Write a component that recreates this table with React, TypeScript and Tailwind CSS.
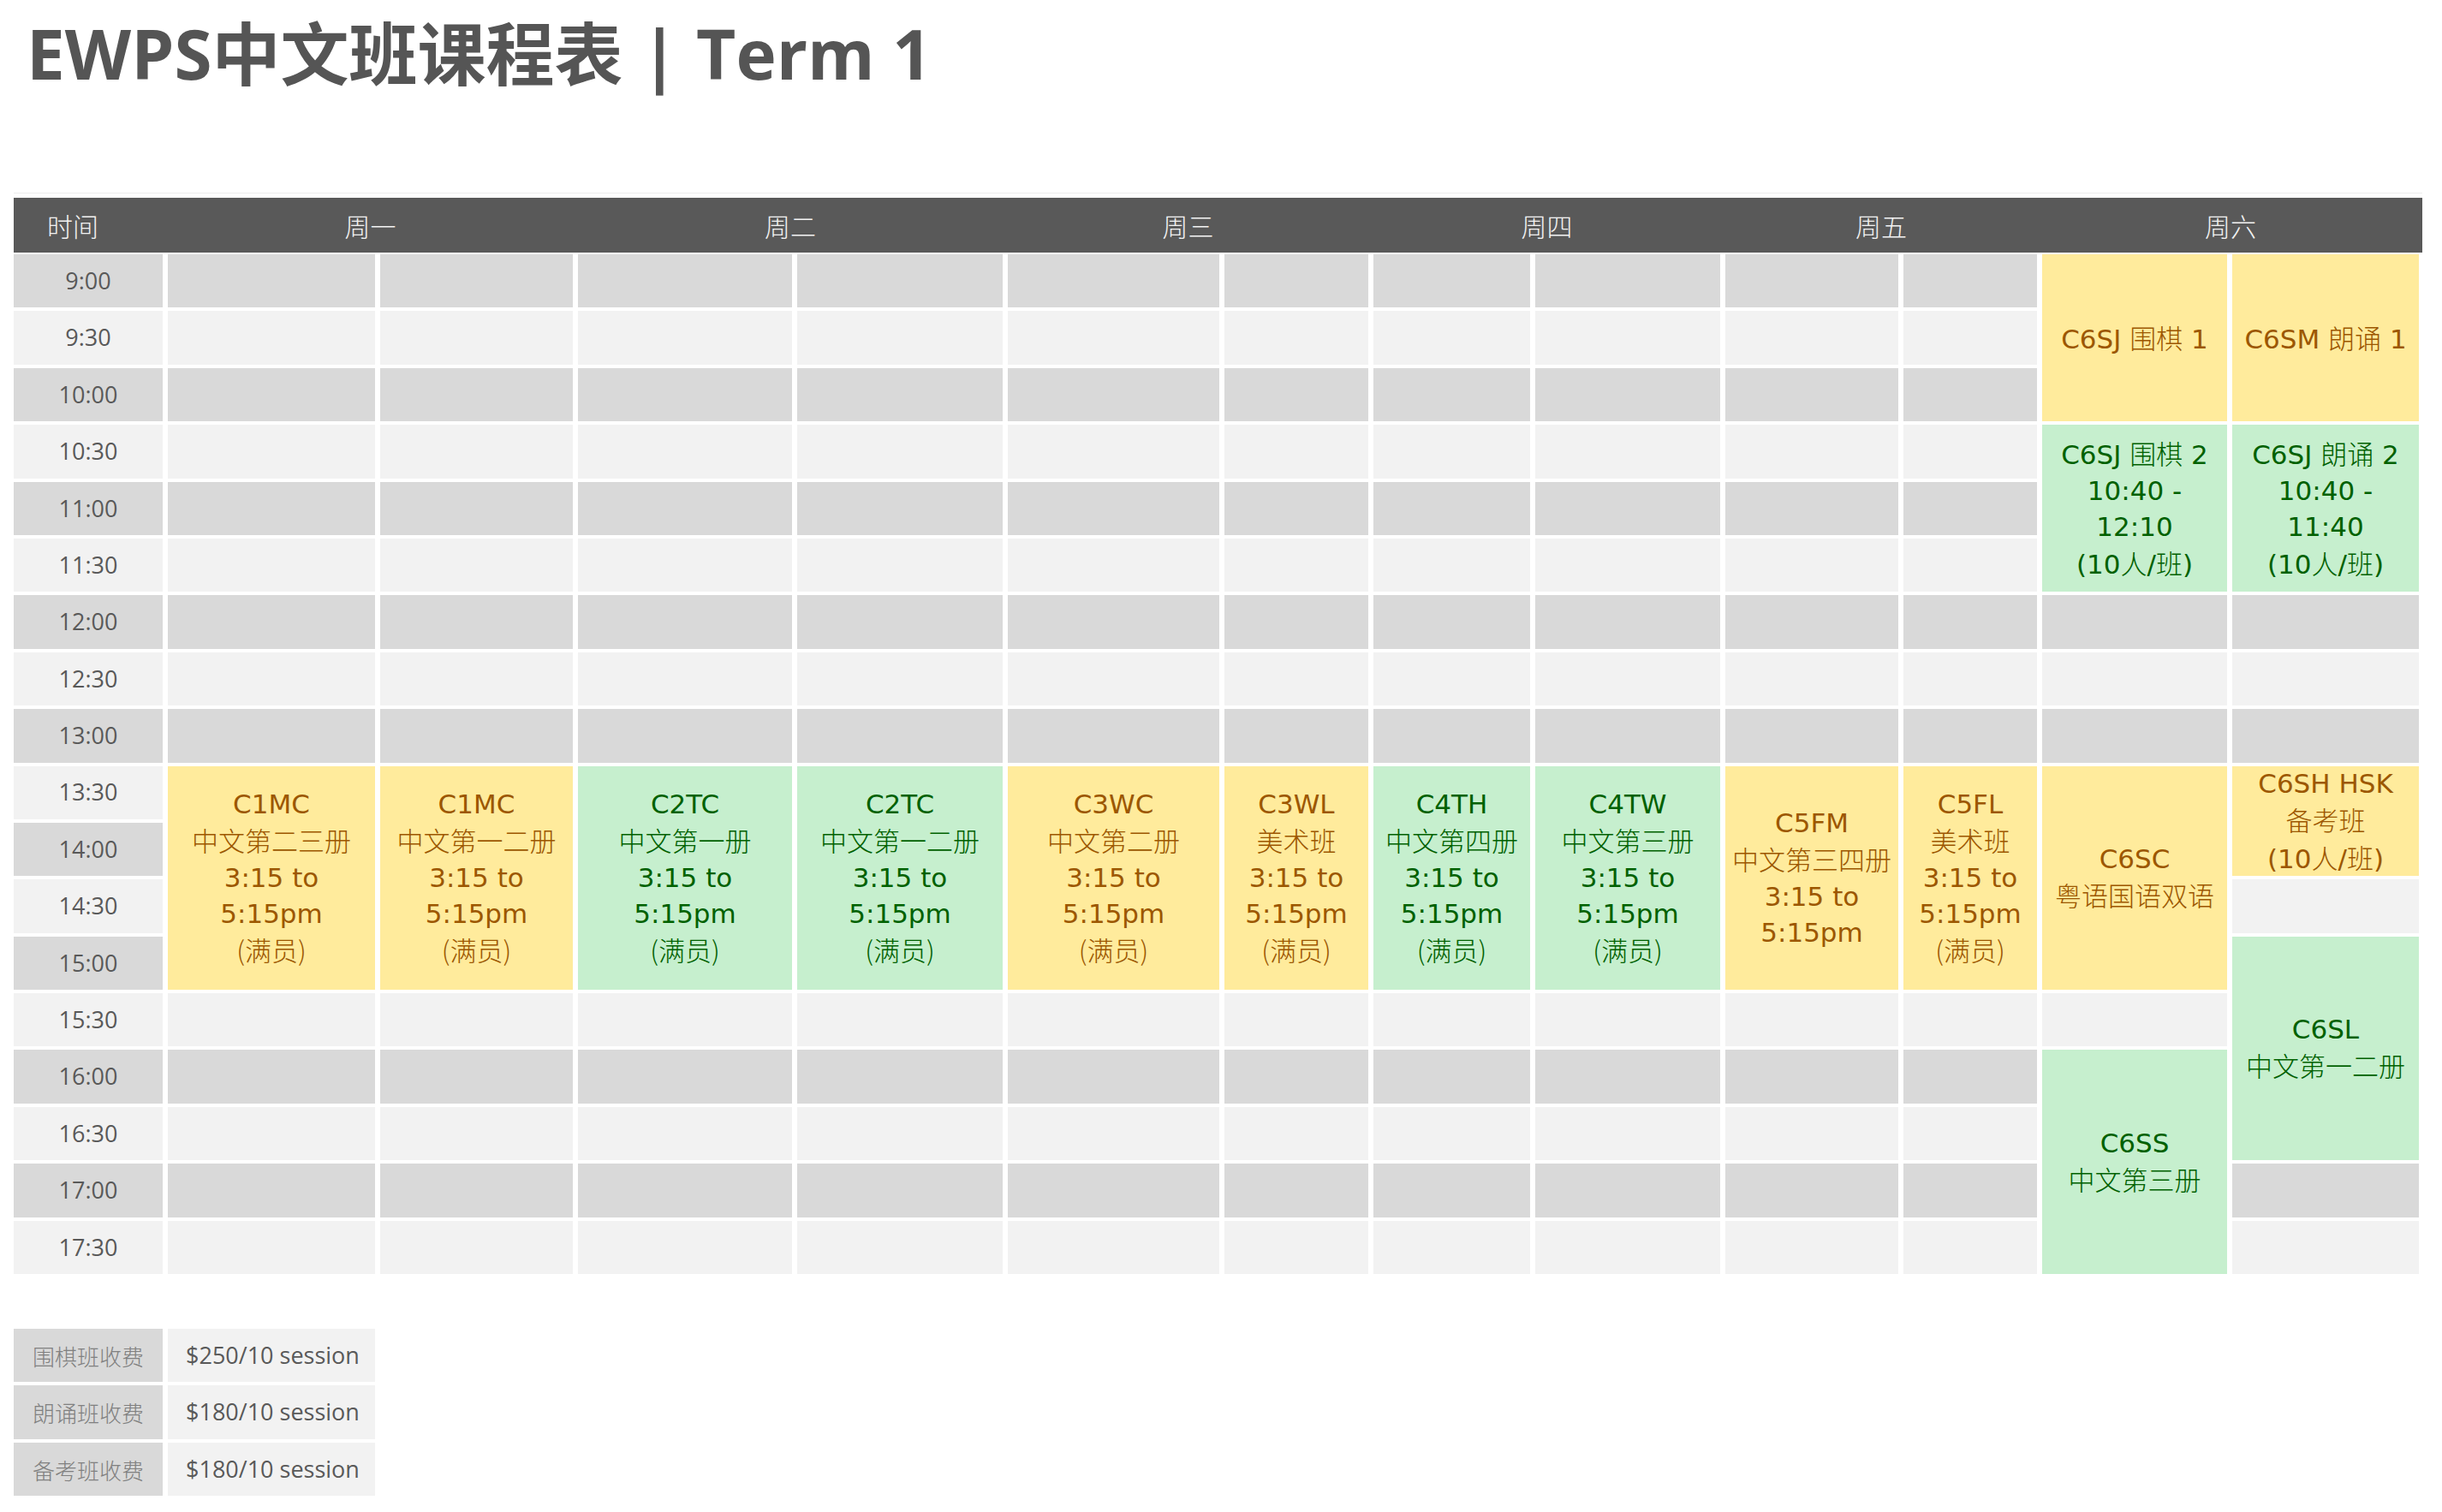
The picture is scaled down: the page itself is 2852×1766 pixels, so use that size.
import React from 'react';

type Tone = 'yellow' | 'green';

interface Course {
  col: number;
  row: number;
  span: number;
  tone: Tone;
  lines: string[];
}

const TIMES = [
  '9:00', '9:30', '10:00', '10:30', '11:00', '11:30', '12:00', '12:30', '13:00',
  '13:30', '14:00', '14:30', '15:00', '15:30', '16:00', '16:30', '17:00', '17:30',
];

const DAYS = ['周一', '周二', '周三', '周四', '周五', '周六'];

const FULL = '(满员)';
const TIME_LINES = ['3:15 to', '5:15pm'];

const COURSES: Course[] = [
  { col: 1, row: 9, span: 4, tone: 'yellow', lines: ['C1MC', '中文第二三册', ...TIME_LINES, FULL] },
  { col: 2, row: 9, span: 4, tone: 'yellow', lines: ['C1MC', '中文第一二册', ...TIME_LINES, FULL] },
  { col: 3, row: 9, span: 4, tone: 'green', lines: ['C2TC', '中文第一册', ...TIME_LINES, FULL] },
  { col: 4, row: 9, span: 4, tone: 'green', lines: ['C2TC', '中文第一二册', ...TIME_LINES, FULL] },
  { col: 5, row: 9, span: 4, tone: 'yellow', lines: ['C3WC', '中文第二册', ...TIME_LINES, FULL] },
  { col: 6, row: 9, span: 4, tone: 'yellow', lines: ['C3WL', '美术班', ...TIME_LINES, FULL] },
  { col: 7, row: 9, span: 4, tone: 'green', lines: ['C4TH', '中文第四册', ...TIME_LINES, FULL] },
  { col: 8, row: 9, span: 4, tone: 'green', lines: ['C4TW', '中文第三册', ...TIME_LINES, FULL] },
  { col: 9, row: 9, span: 4, tone: 'yellow', lines: ['C5FM', '中文第三四册', ...TIME_LINES] },
  { col: 10, row: 9, span: 4, tone: 'yellow', lines: ['C5FL', '美术班', ...TIME_LINES, FULL] },
  // 周六
  { col: 11, row: 0, span: 3, tone: 'yellow', lines: ['C6SJ 围棋 1'] },
  { col: 11, row: 3, span: 3, tone: 'green', lines: ['C6SJ 围棋 2', '10:40 -', '12:10', '(10人/班)'] },
  { col: 11, row: 9, span: 4, tone: 'yellow', lines: ['C6SC', '粤语国语双语'] },
  { col: 11, row: 14, span: 4, tone: 'green', lines: ['C6SS', '中文第三册'] },
  { col: 12, row: 0, span: 3, tone: 'yellow', lines: ['C6SM 朗诵 1'] },
  { col: 12, row: 3, span: 3, tone: 'green', lines: ['C6SJ 朗诵 2', '10:40 -', '11:40', '(10人/班)'] },
  { col: 12, row: 9, span: 2, tone: 'yellow', lines: ['C6SH HSK', '备考班', '(10人/班)'] },
  { col: 12, row: 12, span: 4, tone: 'green', lines: ['C6SL', '中文第一二册'] },
];

const FEES = [
  { label: '围棋班收费', price: '$250/10 session' },
  { label: '朗诵班收费', price: '$180/10 session' },
  { label: '备考班收费', price: '$180/10 session' },
];

const SPAN: Record<number, string> = {
  1: 'row-span-1',
  2: 'row-span-2',
  3: 'row-span-3',
  4: 'row-span-4',
};

const TONE: Record<Tone, string> = {
  yellow: 'bg-[#ffeb9c] text-[#9c5700]',
  green: 'bg-[#c6efce] text-[#006100]',
};

const COLS =
  'grid-cols-[174px_242px_225px_250px_240px_247px_168px_183px_216px_202px_156px_216px_218px]';

const CJK = /([\u3000-\u9fff\uff00-\uffef]+)/;

// Chinese runs get the thin CJK face, the rest stays in DejaVu
const Line: React.FC<{ text: string }> = ({ text }) => {
  if (text === FULL) {
    return <span className="font-['Noto_Sans_CJK_SC',sans-serif] font-light">{text}</span>;
  }
  return (
    <>
      {text.split(CJK).map((part, i) =>
        CJK.test(part) ? (
          <span key={i} className="font-['Noto_Sans_CJK_SC',sans-serif] font-light">
            {part}
          </span>
        ) : (
          <React.Fragment key={i}>{part}</React.Fragment>
        )
      )}
    </>
  );
};

const rowBg = (r: number) => (r % 2 === 0 ? 'bg-[#d9d9d9]' : 'bg-[#f2f2f2]');

const App: React.FC = () => {
  const cells: React.ReactNode[] = [];

  TIMES.forEach((t, r) => {
    cells.push(
      <div
        key={`t-${r}`}
        className={`${rowBg(r)} flex items-center justify-center font-['Open_Sans',sans-serif] text-[27px] text-[#595959]`}
      >
        {t}
      </div>
    );
    for (let c = 1; c <= 12; c++) {
      const covered = COURSES.some((k) => k.col === c && r > k.row && r < k.row + k.span);
      if (covered) continue;
      const course = COURSES.find((k) => k.col === c && k.row === r);
      if (course) {
        cells.push(
          <div
            key={`c-${r}-${c}`}
            className={`${SPAN[course.span]} ${TONE[course.tone]} flex flex-col items-center justify-center text-center text-[31px] leading-[42px] whitespace-nowrap`}
          >
            {course.lines.map((l, i) => (
              <div key={i}>
                <Line text={l} />
              </div>
            ))}
          </div>
        );
      } else {
        cells.push(<div key={`e-${r}-${c}`} className={rowBg(r)} />);
      }
    }
  });

  return (
    <div className="min-h-screen bg-white pl-[16px] pb-[20px] font-['DejaVu_Sans','Noto_Sans_CJK_SC',sans-serif]">
      {/* Title */}
      <h1 className="pt-[22px] pl-[15px] font-['Open_Sans','Noto_Sans_CJK_SC',sans-serif] text-[80px] leading-[80px] font-bold text-[#555555]">
        EWPS中文班课程表 | Term 1
      </h1>

      {/* Timetable */}
      <section className="mt-[123px] w-[2813px] border-t border-[#ececec] pt-[5px]">
        <div className={`grid ${COLS} h-[64px] w-[2813px] gap-x-[6px] bg-[#595959] font-['Noto_Sans_CJK_SC',sans-serif] text-[30px] font-light text-[#f2f2f2]`}>
          <div className="flex items-center pl-[39px]">时间</div>
          {DAYS.map((d) => (
            <div key={d} className="col-span-2 flex items-center justify-center">
              {d}
            </div>
          ))}
        </div>

        <div className={`mt-[2px] grid ${COLS} auto-rows-[62.4px] gap-x-[6px] gap-y-[4px]`}>
          {cells}
        </div>
      </section>

      {/* Fees */}
      <section className="mt-[64px] grid grid-cols-[174px_242px] auto-rows-[62.4px] gap-x-[6px] gap-y-[4px]">
        {FEES.map((f) => (
          <React.Fragment key={f.label}>
            <div className="flex items-center justify-center bg-[#d9d9d9] font-['Noto_Sans_CJK_SC',sans-serif] text-[26px] font-light text-[#808080]">
              {f.label}
            </div>
            <div className="flex items-center bg-[#f2f2f2] pl-[21px] font-['Open_Sans',sans-serif] text-[27px] text-[#595959]">
              {f.price}
            </div>
          </React.Fragment>
        ))}
      </section>
    </div>
  );
};

export default App;
